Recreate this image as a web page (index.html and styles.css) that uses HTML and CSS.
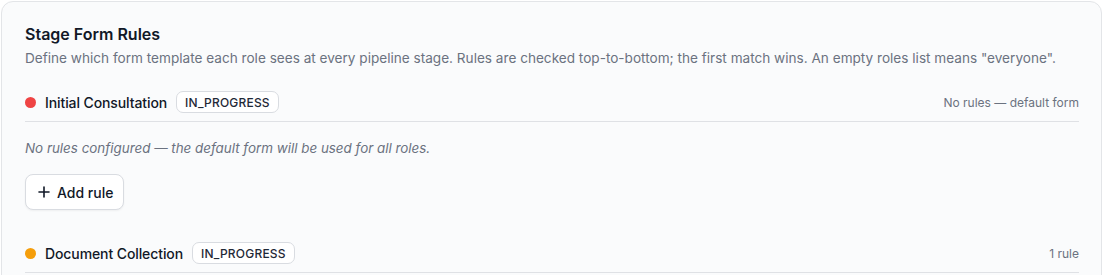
FILE: index.html
```html
<!DOCTYPE html>
<html lang="en">
<head>
    <meta charset="UTF-8">
    <meta name="viewport" content="width=device-width, initial-scale=1.0">
    <title>Stage Form Rules</title>
    <link rel="stylesheet" href="styles.css">
</head>
<body>

    <!-- Stage form rules card -->
    <section class="card">
        <h2 class="card-title">Stage Form Rules</h2>
        <p class="card-desc">Define which form template each role sees at every pipeline stage. Rules are checked top-to-bottom; the first match wins. An empty roles list means "everyone".</p>

        <div class="stage">
            <div class="stage-head">
                <span class="dot dot-red"></span>
                <span class="stage-name">Initial Consultation</span>
                <span class="badge">IN_PROGRESS</span>
                <span class="stage-meta">No rules — default form</span>
            </div>
            <div class="stage-body">
                <p class="empty">No rules configured — the default form will be used for all roles.</p>
                <button class="btn">
                    <svg width="14" height="14" viewBox="0 0 14 14" fill="none" stroke="currentColor" stroke-width="1.6" stroke-linecap="round">
                        <path d="M7 2v10M2 7h10"/>
                    </svg>
                    Add rule
                </button>
            </div>
        </div>

        <div class="stage">
            <div class="stage-head">
                <span class="dot dot-orange"></span>
                <span class="stage-name">Document Collection</span>
                <span class="badge">IN_PROGRESS</span>
                <span class="stage-meta">1 rule</span>
            </div>
        </div>
    </section>

</body>
</html>
```

FILE: styles.css
```css
/* Reset default styles */
* {
    margin: 0;
    padding: 0;
    box-sizing: border-box;
}

body {
    font-family: Inter, "Noto Sans", sans-serif;
    background-color: #ffffff;
    color: #111827;
}

.card {
    margin: 1px 2px 0 1px;
    height: 320px;
    background-color: #fafbfc;
    border: 1px solid #e3e5e8;
    border-radius: 12px;
    padding: 20px 22px 0 23px;
}

.card-title {
    font-size: 16px;
    line-height: 24px;
    font-weight: 600;
    color: #111827;
}

.card-desc {
    margin-top: 2px;
    font-size: 13.6px;
    line-height: 20px;
    color: #6b7280;
}

.stage {
    margin-top: 23px;
}

.stage + .stage {
    margin-top: 32px;
}

.stage-head {
    display: flex;
    align-items: center;
    padding-bottom: 8px;
    border-bottom: 1px solid #dfe1e5;
}

.dot {
    width: 11px;
    height: 11px;
    border-radius: 50%;
    margin-right: 9px;
}

.dot-red {
    background-color: #ef4444;
}

.dot-orange {
    background-color: #f59e0b;
}

.stage-name {
    font-size: 14px;
    font-weight: 500;
    color: #111827;
    margin-right: 9px;
    letter-spacing: -0.1px;
}

.badge {
    display: inline-flex;
    align-items: center;
    height: 22px;
    padding: 0 8px;
    border: 1px solid #d9dce1;
    border-radius: 7px;
    background-color: #ffffff;
    font-size: 12px;
    font-weight: 500;
    color: #1f2937;
    letter-spacing: 0.2px;
}

.stage-meta {
    margin-left: auto;
    font-size: 12px;
    color: #6b7280;
}

.stage-body {
    padding-top: 16px;
}

.empty {
    font-size: 13.4px;
    line-height: 20px;
    font-style: italic;
    color: #6b7280;
}

.btn {
    display: inline-flex;
    align-items: center;
    gap: 6px;
    margin-top: 16px;
    height: 36px;
    padding: 0 10px 0 11px;
    background-color: #ffffff;
    border: 1px solid #d9dce1;
    border-radius: 8px;
    box-shadow: 0 1px 2px rgba(0, 0, 0, 0.05);
    font-family: inherit;
    font-size: 14px;
    font-weight: 500;
    color: #111827;
    cursor: pointer;
}
```
